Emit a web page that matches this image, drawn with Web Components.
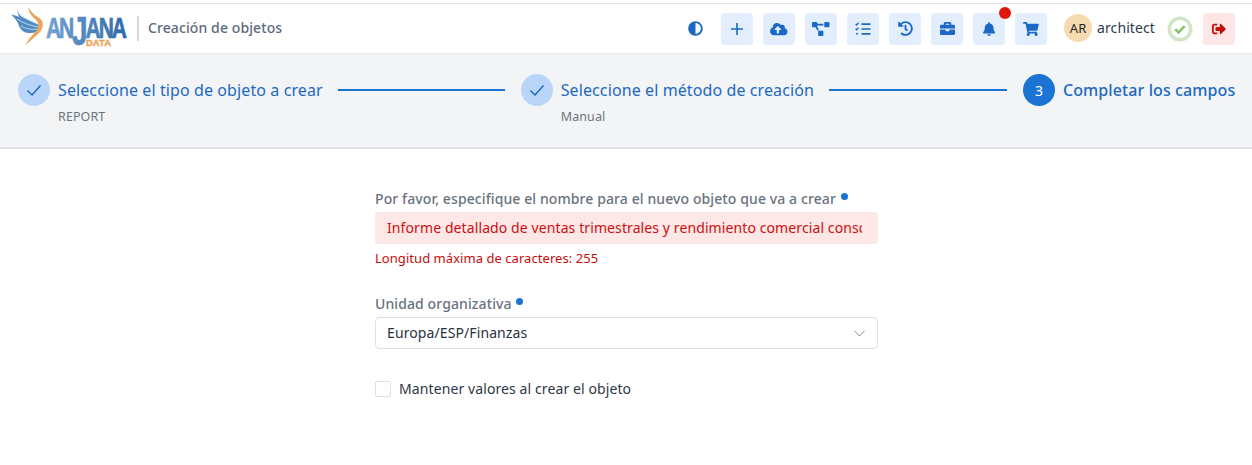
<!DOCTYPE html>
<html lang="es">
<head>
<meta charset="utf-8">
<title>Creación de objetos</title>
<style>
html, body { margin: 0; padding: 0; background: #fff; }
body { font-family: "Noto Sans", "Open Sans", sans-serif; letter-spacing: .1px; overflow: hidden; }
</style>
</head>
<body>
<app-page>
  <app-header slot="header" title="Creación de objetos"></app-header>
  <step-bar slot="steps">
    <step-item state="done" sub="REPORT" label="Seleccione el tipo de objeto a crear"></step-item>
    <step-line style="--w:167px"></step-line>
    <step-item state="done" sub="Manual" label="Seleccione el método de creación"></step-item>
    <step-line style="--w:178px"></step-line>
    <step-item state="active" number="3" label="Completar los campos"></step-item>
  </step-bar>
  <object-form slot="form"></object-form>
</app-page>

<script>
const ICONS = {
    adjust: ["0 0 512 512", "M8 256c0 136.966 111.033 248 248 248s248-111.034 248-248S392.966 8 256 8 8 119.033 8 256zm248 184V72c101.705 0 184 82.311 184 184 0 101.705-82.311 184-184 184z"],
    cloud: ["0 0 640 512", "M537.6 226.6c4.1-10.7 6.4-22.4 6.4-34.6 0-53-43-96-96-96-19.7 0-38.1 6-53.3 16.2C367 64.2 315.3 32 256 32c-88.4 0-160 71.6-160 160 0 2.7.1 5.4.2 8.1C40.2 219.8 0 273.2 0 336c0 79.5 64.5 144 144 144h368c70.7 0 128-57.3 128-128 0-61.9-44-113.6-102.4-125.4zM393.4 288H328v112c0 8.8-7.2 16-16 16h-48c-8.8 0-16-7.2-16-16V288h-65.4c-14.3 0-21.4-17.2-11.3-27.3l105.4-105.4c6.2-6.2 16.4-6.2 22.6 0l105.4 105.4c10.1 10.1 2.9 27.3-11.3 27.3z"],
    diagram: ["0 0 640 512", "M384 320H256c-17.67 0-32 14.33-32 32v128c0 17.67 14.33 32 32 32h128c17.67 0 32-14.33 32-32V352c0-17.67-14.33-32-32-32zM192 32c0-17.67-14.33-32-32-32H32C14.33 0 0 14.33 0 32v128c0 17.67 14.33 32 32 32h95.72l73.16 128.04C211.98 300.98 232.4 288 256 288h.28L192 175.51V128h224V64H192V32zM608 0H480c-17.67 0-32 14.33-32 32v128c0 17.67 14.33 32 32 32h128c17.67 0 32-14.33 32-32V32c0-17.67-14.33-32-32-32z"],
    history: ["0 0 512 512", "M504 255.531c.253 136.64-111.18 248.372-247.82 248.468-59.015.042-113.223-20.53-155.822-54.911-11.077-8.94-11.905-25.541-1.839-35.607l11.267-11.267c8.609-8.609 22.353-9.551 31.891-1.984C173.062 425.135 212.781 440 256 440c101.705 0 184-82.311 184-184 0-101.705-82.311-184-184-184-48.814 0-93.149 18.969-126.068 49.932l50.754 50.754c10.08 10.08 2.941 27.314-11.313 27.314H24c-8.837 0-16-7.163-16-16V38.627c0-14.254 17.234-21.393 27.314-11.314l49.372 49.372C129.209 34.136 189.552 8 256 8c136.81 0 247.747 110.78 248 247.531zm-180.912 78.784l9.823-12.63c8.138-10.463 6.253-25.542-4.21-33.679L288 256.349V152c0-13.255-10.745-24-24-24h-16c-13.255 0-24 10.745-24 24v135.651l65.409 50.874c10.463 8.137 25.541 6.253 33.679-4.21z"],
    briefcase: ["0 0 512 512", "M320 336c0 8.84-7.16 16-16 16h-96c-8.84 0-16-7.16-16-16v-48H0v144c0 25.6 22.4 48 48 48h416c25.6 0 48-22.4 48-48V288H320v48zm144-208h-80V80c0-25.6-22.4-48-48-48H176c-25.6 0-48 22.4-48 48v48H48c-25.6 0-48 22.4-48 48v80h512v-80c0-25.6-22.4-48-48-48zm-144 0H192V96h128v32z"],
    bell: ["0 0 448 512", "M224 512c35.32 0 63.97-28.65 63.97-64H160.03c0 35.35 28.65 64 63.97 64zm215.39-149.71c-19.32-20.76-55.47-51.99-55.47-154.29 0-77.7-54.48-139.9-127.94-155.16V32c0-17.67-14.32-32-31.98-32s-31.98 14.33-31.98 32v20.84C118.56 68.1 64.08 130.3 64.08 208c0 102.3-36.15 133.53-55.47 154.29-6 6.45-8.66 14.16-8.61 21.71.11 16.4 12.98 32 32.1 32h383.8c19.12 0 32-15.6 32.1-32 .05-7.55-2.61-15.27-8.61-21.71z"],
    cart: ["0 0 576 512", "M528.12 301.319l47.273-208C578.806 78.301 567.391 64 551.99 64H159.208l-9.166-44.81C147.758 8.021 137.93 0 126.529 0H24C10.745 0 0 10.745 0 24v16c0 13.255 10.745 24 24 24h69.883l70.248 343.435C147.325 417.1 136 435.222 136 456c0 30.928 25.072 56 56 56s56-25.072 56-56c0-15.674-6.447-29.835-16.824-40h209.647C430.447 426.165 424 440.326 424 456c0 30.928 25.072 56 56 56s56-25.072 56-56c0-22.172-12.888-41.332-31.579-50.405l5.517-24.276c3.413-15.018-8.002-29.319-23.403-29.319H218.117l-6.545-32h293.145c11.206 0 20.92-7.754 23.403-18.681z"],
    signout: ["0 0 512 512", "M497 273L329 441c-15 15-41 4.5-41-17v-96H152c-13.3 0-24-10.7-24-24v-96c0-13.3 10.7-24 24-24h136V88c0-21.4 25.9-32 41-17l168 168c9.3 9.4 9.3 24.6 0 34zM192 436v-40c0-6.6-5.4-12-12-12H96c-17.7 0-32-14.3-32-32V160c0-17.7 14.3-32 32-32h84c6.6 0 12-5.4 12-12V76c0-6.6-5.4-12-12-12H96c-53 0-96 43-96 96v192c0 53 43 96 96 96h84c6.6 0 12-5.4 12-12z"],
};

function iconSvg( name, size ) {
    if ( name === "plus" )
	return `<svg width="14" height="14" viewBox="0 0 14 14"><path d="M7 1v12M1 7h12" stroke="currentColor" stroke-width="1.6" fill="none"/></svg>`;
    if ( name === "tasks" )
	return `<svg width="16" height="14" viewBox="0 0 16 14" fill="none" stroke="currentColor"><path d="M6.5 2.2H15.5M6.5 7H15.5M6.5 11.8H15.5" stroke-width="1.7"/><path d="M.6 2l1 1 2-2.200M.6 6.800l1 1 2-2.200" stroke-width="1.300"/><circle cx="2" cy="11.800" r="1" fill="currentColor" stroke="none"/></svg>`;
    const [ box, d ] = ICONS[name];
    return `<svg height="${size}" viewBox="${box}"><path fill="currentColor" d="${d}"/></svg>`;
}

class AppPage extends HTMLElement {
    constructor () {
	super();
	this.attachShadow({ mode: "open" }).innerHTML = `
<style>
:host { display: flex; flex-direction: column; height: 465px; }
</style>
<slot name="header"></slot>
<slot name="steps"></slot>
<slot name="form"></slot>`;
    }
}

class IconButton extends HTMLElement {
    constructor () {
	super();
	const name = this.getAttribute("icon");
	const size = this.getAttribute("size") || 14;
	this.attachShadow({ mode: "open" }).innerHTML = `
<style>
:host {
  display: flex; align-items: center; justify-content: center; position: relative;
  width: 32px; height: 32px; border-radius: 4px;
  background: #e3eefd; color: #1b69c4;
}
:host([tone="danger"]) { background: #fde6e6; color: #c40f0f; }
:host([plain]) { background: none; }
:host([dot])::after {
  content: ""; position: absolute; top: -6px; right: -6px;
  width: 12px; height: 12px; border-radius: 50%; background: #e3160f;
}
svg { display: block; }
</style>${iconSvg( name, size )}`;
    }
}

class AppLogo extends HTMLElement {
    constructor () {
	super();
	this.attachShadow({ mode: "open" }).innerHTML = `
<style>
:host { display: block; width: 118px; height: 40px; }
svg { display: block; overflow: visible; }
</style>
<svg width="118" height="40" viewBox="0 0 118 40">
  <defs>
    <linearGradient id="lg" gradientUnits="userSpaceOnUse" x1="0" x2="116" y1="0" y2="0">
      <stop offset="0" stop-color="#74a3d2"/><stop offset="1" stop-color="#2c6aa6"/>
    </linearGradient>
  </defs>
  <path d="M7 0C6 6 12 9 18 11C23 13 27 15 30 18C28 22 24 24 18 24C12 24 8 19 7 14C5 11 3 8 0 5.500C3 6.500 5 6.500 8 8C7 5 6 3 7 0Z" fill="#4f8cc4"/>
  <path d="M6 10C12 14 20 17 28 18M10 17C15 20 22 21 27 20M9 4C12 8 17 11 24 14" stroke="#d6e6f4" stroke-width=".8" fill="none"/>
  <path d="M17 -1.500C20 2 22 5 25 7C28 8 30 10 31 12C33 16 31 21 28 24C24 28 19 32 14 36.500C17 31 21 26 25 22C28 18 28 14 25 11C21 8 18 4 17 -1.500Z" fill="#eda35c"/>
  <text transform="translate(35 28.500) scale(.7 1)" font-family="'Liberation Sans', sans-serif" font-weight="700" font-size="30" letter-spacing="-3" fill="url(#lg)" stroke="url(#lg)" stroke-width=".7">AN<tspan dy="7" font-size="40">J</tspan><tspan dy="-7">ANA</tspan></text>
  <text x="75" y="36.500" font-family="'Liberation Sans', sans-serif" font-weight="700" font-size="9.500" letter-spacing="0" fill="#ee9f52" stroke="#ee9f52" stroke-width=".3" textLength="25" lengthAdjust="spacingAndGlyphs">DATA</text>
</svg>`;
    }
}

class AppHeader extends HTMLElement {
    constructor () {
	super();
	const title = this.getAttribute("title");
	this.removeAttribute("title");
	this.attachShadow({ mode: "open" }).innerHTML = `
<style>
:host {
  display: flex; align-items: center; box-sizing: border-box; flex: none;
  height: 51px; margin-top: 3px; padding: 0 17px 0 11px;
  border-top: 1px solid #e2e4e7; border-bottom: 1px solid #e6e8eb; background: #fff;
}
.divider { width: 2px; height: 25px; margin: 0 9px 0 8px; background: #d3d8de; }
.title { margin-bottom: 2px; font-size: 14px; font-weight: 500; color: #5b6a7e; }
.tools { display: flex; gap: 10px; margin-left: auto; }
.avatar {
  display: flex; align-items: center; justify-content: center;
  width: 28px; height: 28px; margin: 0 0 1px 17px; border-radius: 50%;
  background: #f6dbb0; color: #22272e; font-size: 13px;
}
.user { margin: 0 0 2px 5px; font-size: 14px; color: #2c3a4d; }
.badge { display: block; margin-left: 12px; }
.exit { margin-left: 10px; }
</style>
<app-logo></app-logo>
<div class="divider"></div>
<div class="title">${title}</div>
<div class="tools">
  <icon-button plain icon="adjust" size="15"></icon-button>
  <icon-button icon="plus"></icon-button>
  <icon-button icon="cloud" size="14"></icon-button>
  <icon-button icon="diagram" size="14"></icon-button>
  <icon-button icon="tasks"></icon-button>
  <icon-button icon="history" size="15"></icon-button>
  <icon-button icon="briefcase" size="15"></icon-button>
  <icon-button dot icon="bell" size="14"></icon-button>
  <icon-button icon="cart" size="14"></icon-button>
</div>
<div class="avatar">AR</div>
<div class="user">architect</div>
<svg class="badge" width="26" height="26" viewBox="0 0 26 26" fill="none">
  <circle cx="13" cy="13" r="10.600" stroke="#d3e5c7" stroke-width="3.200"/>
  <circle cx="13" cy="13" r="12" stroke="#d3e5c7" stroke-width="1.200" stroke-dasharray="3.200 2.200"/>
  <path d="M8.300 13.300l3.300 3.200 6-6.400" stroke="#8cc16f" stroke-width="2.600"/>
</svg>
<icon-button class="exit" tone="danger" icon="signout" size="14"></icon-button>`;
    }
}

class StepBar extends HTMLElement {
    constructor () {
	super();
	this.attachShadow({ mode: "open" }).innerHTML = `
<style>
:host {
  display: flex; align-items: flex-start; box-sizing: border-box; flex: none;
  height: 95px; padding: 20px 0 0 18px;
  background: #f3f4f6; border-bottom: 2px solid #dfe3e8;
}
</style>
<slot></slot>`;
    }
}

class StepItem extends HTMLElement {
    constructor () {
	super();
	const done = this.getAttribute("state") === "done";
	const sub = this.getAttribute("sub");
	const mark = done
	    ? `<svg width="16" height="16" viewBox="0 0 16 16" fill="none"><path d="M1.500 8.500l4.500 4.500 8.500-9.500" stroke="#1c66bb" stroke-width="1.400"/></svg>`
	    : this.getAttribute("number");
	this.attachShadow({ mode: "open" }).innerHTML = `
<style>
:host { display: grid; grid-template-columns: 32px auto; column-gap: 8px; }
.circle {
  display: flex; align-items: center; justify-content: center;
  width: 32px; height: 32px; border-radius: 50%;
  background: #bad5fa; color: #fff; font-size: 14px;
}
:host([state="active"]) .circle { background: #1b74d4; }
.label { font-size: 16px; line-height: 32px; color: #1c69c4; white-space: nowrap; }
:host([state="active"]) .label { font-weight: 500; }
.sub { grid-column: 2; font-size: 12.500px; line-height: 16px; margin-top: 3px; color: #6c7580; }
</style>
<div class="circle">${mark}</div>
<div class="label">${this.getAttribute("label")}</div>
${sub ? `<div class="sub">${sub}</div>` : ""}`;
    }
}

class StepLine extends HTMLElement {
    constructor () {
	super();
	this.attachShadow({ mode: "open" }).innerHTML = `
<style>
:host {
  display: block; flex: none; width: var(--w); height: 2px;
  margin: 15px 16px 0 15px; background: #1b74d4;
}
</style>`;
    }
}

class FormField extends HTMLElement {
    constructor () {
	super();
	const required = this.hasAttribute("required");
	this.attachShadow({ mode: "open" }).innerHTML = `
<style>
:host { display: block; }
label { display: block; height: 20px; margin-bottom: 3px; font-size: 14px; line-height: 20px; font-weight: 500; color: #69727e; white-space: nowrap; }
i { display: inline-block; width: 7px; height: 7px; margin-left: 1px; border-radius: 50%; background: #1b74d4; vertical-align: 4px; }
</style>
<label>${this.getAttribute("label")}${required ? " <i></i>" : ""}</label>
<slot></slot>`;
    }
}

class ErrorInput extends HTMLElement {
    constructor () {
	super();
	this.attachShadow({ mode: "open" }).innerHTML = `
<style>
:host {
  display: block; box-sizing: border-box; height: 32px; padding: 0 16px 0 12px;
  border-radius: 4px; background: #fde7e7; color: #d00d0d;
  font-size: 14px; line-height: 32px;
}
div { overflow: hidden; white-space: nowrap; }
</style>
<div><slot></slot></div>`;
    }
}

class SelectBox extends HTMLElement {
    constructor () {
	super();
	this.attachShadow({ mode: "open" }).innerHTML = `
<style>
:host {
  display: flex; align-items: center; justify-content: space-between;
  box-sizing: border-box; height: 32px; padding: 0 12px 0 11px;
  border: 1px solid #dcdfe4; border-radius: 4px; background: #fff;
  font-size: 14px; color: #28323f;
}
span { margin-bottom: 2px; }
svg { display: block; }
</style>
<span><slot></slot></span>
<svg width="11" height="7" viewBox="0 0 11 7" fill="none"><path d="M.5 .8l5 5.200 5-5.200" stroke="#80868f" stroke-width="1"/></svg>`;
    }
}

class CheckField extends HTMLElement {
    constructor () {
	super();
	this.attachShadow({ mode: "open" }).innerHTML = `
<style>
:host { display: flex; align-items: center; gap: 8px; font-size: 14px; color: #2d3845; }
.box { box-sizing: border-box; width: 16px; height: 16px; border: 1px solid #dcdfe4; border-radius: 2px; background: #fff; }
</style>
<div class="box"></div>
<span><slot></slot></span>`;
    }
}

class ObjectForm extends HTMLElement {
    constructor () {
	super();
	this.attachShadow({ mode: "open" }).innerHTML = `
<style>
:host { display: block; padding: 40px 0 0 375px; }
.col { display: flex; flex-direction: column; width: 503px; }
.error { margin-top: 5px; font-size: 13px; letter-spacing: .05px; line-height: 18px; color: #c70c0c; }
.second { margin-top: 27px; }
.check { margin-top: 30px; }
</style>
<div class="col">
  <form-field required label="Por favor, especifique el nombre para el nuevo objeto que va a crear">
    <error-input>Informe detallado de ventas trimestrales y rendimiento comercial consolidado por región</error-input>
  </form-field>
  <div class="error">Longitud máxima de caracteres: 255</div>
  <form-field class="second" required label="Unidad organizativa">
    <select-box>Europa/ESP/Finanzas</select-box>
  </form-field>
  <check-field class="check">Mantener valores al crear el objeto</check-field>
</div>`;
    }
}

customElements.define("app-page", AppPage);
customElements.define("icon-button", IconButton);
customElements.define("app-logo", AppLogo);
customElements.define("app-header", AppHeader);
customElements.define("step-bar", StepBar);
customElements.define("step-item", StepItem);
customElements.define("step-line", StepLine);
customElements.define("form-field", FormField);
customElements.define("error-input", ErrorInput);
customElements.define("select-box", SelectBox);
customElements.define("check-field", CheckField);
customElements.define("object-form", ObjectForm);
</script>
</body>
</html>
